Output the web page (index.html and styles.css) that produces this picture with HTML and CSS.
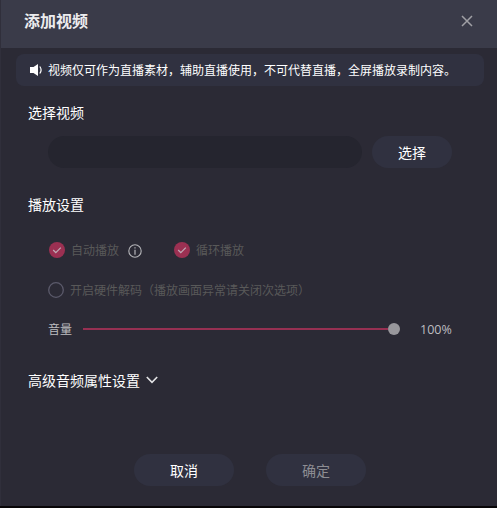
FILE: index.html
```html
<!DOCTYPE html>
<html lang="zh-CN">
<head>
  <meta charset="UTF-8">
  <meta name="viewport" content="width=device-width, initial-scale=1.0">
  <title>添加视频</title>
  <link rel="stylesheet" href="styles.css">
</head>
<body>
  <div class="dialog">
    <header class="dialog-header">
      <h1>添加视频</h1>
      <button type="button" class="close" aria-label="关闭">
        <svg width="12" height="12" viewBox="0 0 12 12"><path d="M1 1l10 10M11 1L1 11" fill="none" stroke="#a0a0a5" stroke-width="1.5"/></svg>
      </button>
    </header>

    <div class="notice">
      <svg width="14" height="14" viewBox="0 0 14 14">
        <path d="M1 4h3.500L9 1v12L4.500 10H1z" fill="#fff"/>
        <path d="M10.800 3.500q2.600 3.500 0 7" fill="none" stroke="#fff" stroke-width="1.200"/>
      </svg>
      <span>视频仅可作为直播素材，辅助直播使用，不可代替直播，全屏播放录制内容。</span>
    </div>

    <form class="content">
      <h2>选择视频</h2>
      <div class="file-row">
        <input type="text" class="file-input" readonly>
        <button type="button" class="btn select">选择</button>
      </div>

      <h2>播放设置</h2>
      <div class="option-row">
        <label class="option auto-play">
          <svg width="16" height="16" viewBox="0 0 16 16"><circle cx="8" cy="8" r="8" fill="#9b3052"/><path d="M4.200 8l2.600 2.600 5-5" fill="none" stroke="#c0a9b4" stroke-width="1.300"/></svg>
          <span>自动播放</span>
        </label>
        <svg class="info" width="14" height="14" viewBox="0 0 14 14"><circle cx="7" cy="7" r="6.200" fill="none" stroke="#b5b5b9" stroke-width="1.100"/><path d="M7 3.200v1.300M7 5.800v5" stroke="#b5b5b9" stroke-width="1.200"/></svg>
        <label class="option loop-play">
          <svg width="16" height="16" viewBox="0 0 16 16"><circle cx="8" cy="8" r="8" fill="#9b3052"/><path d="M4.200 8l2.600 2.600 5-5" fill="none" stroke="#c0a9b4" stroke-width="1.300"/></svg>
          <span>循环播放</span>
        </label>
      </div>
      <div class="option-row decode-row">
        <label class="option">
          <svg width="16" height="16" viewBox="0 0 16 16"><circle cx="8" cy="8" r="7.300" fill="none" stroke="#5b5a6b" stroke-width="1.300"/></svg>
          <span>开启硬件解码（播放画面异常请关闭次选项）</span>
        </label>
      </div>

      <div class="volume-row">
        <span class="volume-label">音量</span>
        <div class="slider">
          <div class="track"></div>
          <div class="thumb"></div>
        </div>
        <span class="volume-value">100%</span>
      </div>

      <h2 class="advanced">
        高级音频属性设置
        <svg width="12" height="8" viewBox="0 0 12 8"><path d="M.8 1L6 6.400 11.200 1" fill="none" stroke="#e4e4e6" stroke-width="1.600"/></svg>
      </h2>
    </form>

    <footer class="actions">
      <button type="button" class="btn cancel">取消</button>
      <button type="button" class="btn confirm" disabled>确定</button>
    </footer>
  </div>
</body>
</html>
```

FILE: styles.css
```css
/* Base Styles */
* {
  box-sizing: border-box;
}

body {
  margin: 0;
  background: #080608;
  font-family: "Noto Sans CJK SC", sans-serif;
  font-size: 12px;
  color: #fff;
  overflow: hidden;
}

h1, h2 {
  margin: 0;
}

svg {
  display: block;
  flex: none;
}

.dialog {
  width: 497px;
  height: 506px;
  background: #2b2a35;
  border-left: 1px solid #302f3b;
  display: flex;
  flex-direction: column;
  white-space: nowrap;
}

.dialog-header {
  height: 48px;
  padding: 0 24px 6px 23px;
  background: #3a3b49;
  display: flex;
  justify-content: space-between;
  align-items: center;
}

.dialog-header h1 {
  padding-bottom: 2px;
  font-size: 16px;
  font-weight: 600;
  line-height: 24px;
  color: #ececee;
}

.close {
  padding: 0;
  border: none;
  background: none;
}

.notice {
  width: 468px;
  height: 32px;
  margin: 6px 0 0 15px;
  padding-left: 13px;
  border-radius: 8px;
  background: #303140;
  display: flex;
  align-items: center;
  gap: 5px;
}

.notice span,
.option span,
.volume-label {
  padding-bottom: 2px;
}

.content {
  padding: 15px 44px 0 27px;
}

.content h2 {
  font-size: 14px;
  font-weight: 400;
  line-height: 22px;
}

.btn {
  height: 32px;
  padding: 0;
  border: none;
  border-radius: 16px;
  background: #303140;
  color: #fff;
  font-family: inherit;
  font-size: 14px;
}

.file-row {
  display: flex;
  gap: 10px;
  margin: 13px 0 25px 20px;
}

.file-input {
  width: 314px;
  height: 32px;
  padding: 0 16px;
  border: none;
  border-radius: 16px;
  background: #25252f;
  color: #fff;
}

.select {
  width: 80px;
}

/* Playback options */
.option-row {
  display: flex;
  align-items: center;
  height: 20px;
  margin: 25px 0 0 21px;
  color: #595959;
}

.option {
  display: flex;
  align-items: center;
  gap: 6px;
}

.info {
  margin: 2px 32px 0 9px;
}

.decode-row {
  margin: 20px 0 0 20px;
}

.volume-row {
  display: flex;
  align-items: center;
  height: 20px;
  margin: 19px 0 0 20px;
  color: #bdbdc0;
}

.slider {
  display: flex;
  align-items: center;
  width: 317px;
  margin-left: 11px;
}

.track {
  flex: 1;
  height: 2px;
  background: #963052;
}

.thumb {
  width: 12px;
  height: 12px;
  border-radius: 50%;
  background: #98979c;
}

.volume-value {
  margin-left: 20px;
  font-family: "Open Sans", sans-serif;
  font-size: 12.500px;
}

.content .advanced {
  display: flex;
  align-items: center;
  gap: 6px;
  margin-top: 30px;
}

.actions {
  display: flex;
  justify-content: center;
  gap: 32px;
  margin: auto 0 20px 2px;
}

.actions .btn {
  width: 100px;
}

.actions .confirm {
  color: #8d8d93;
}
```
